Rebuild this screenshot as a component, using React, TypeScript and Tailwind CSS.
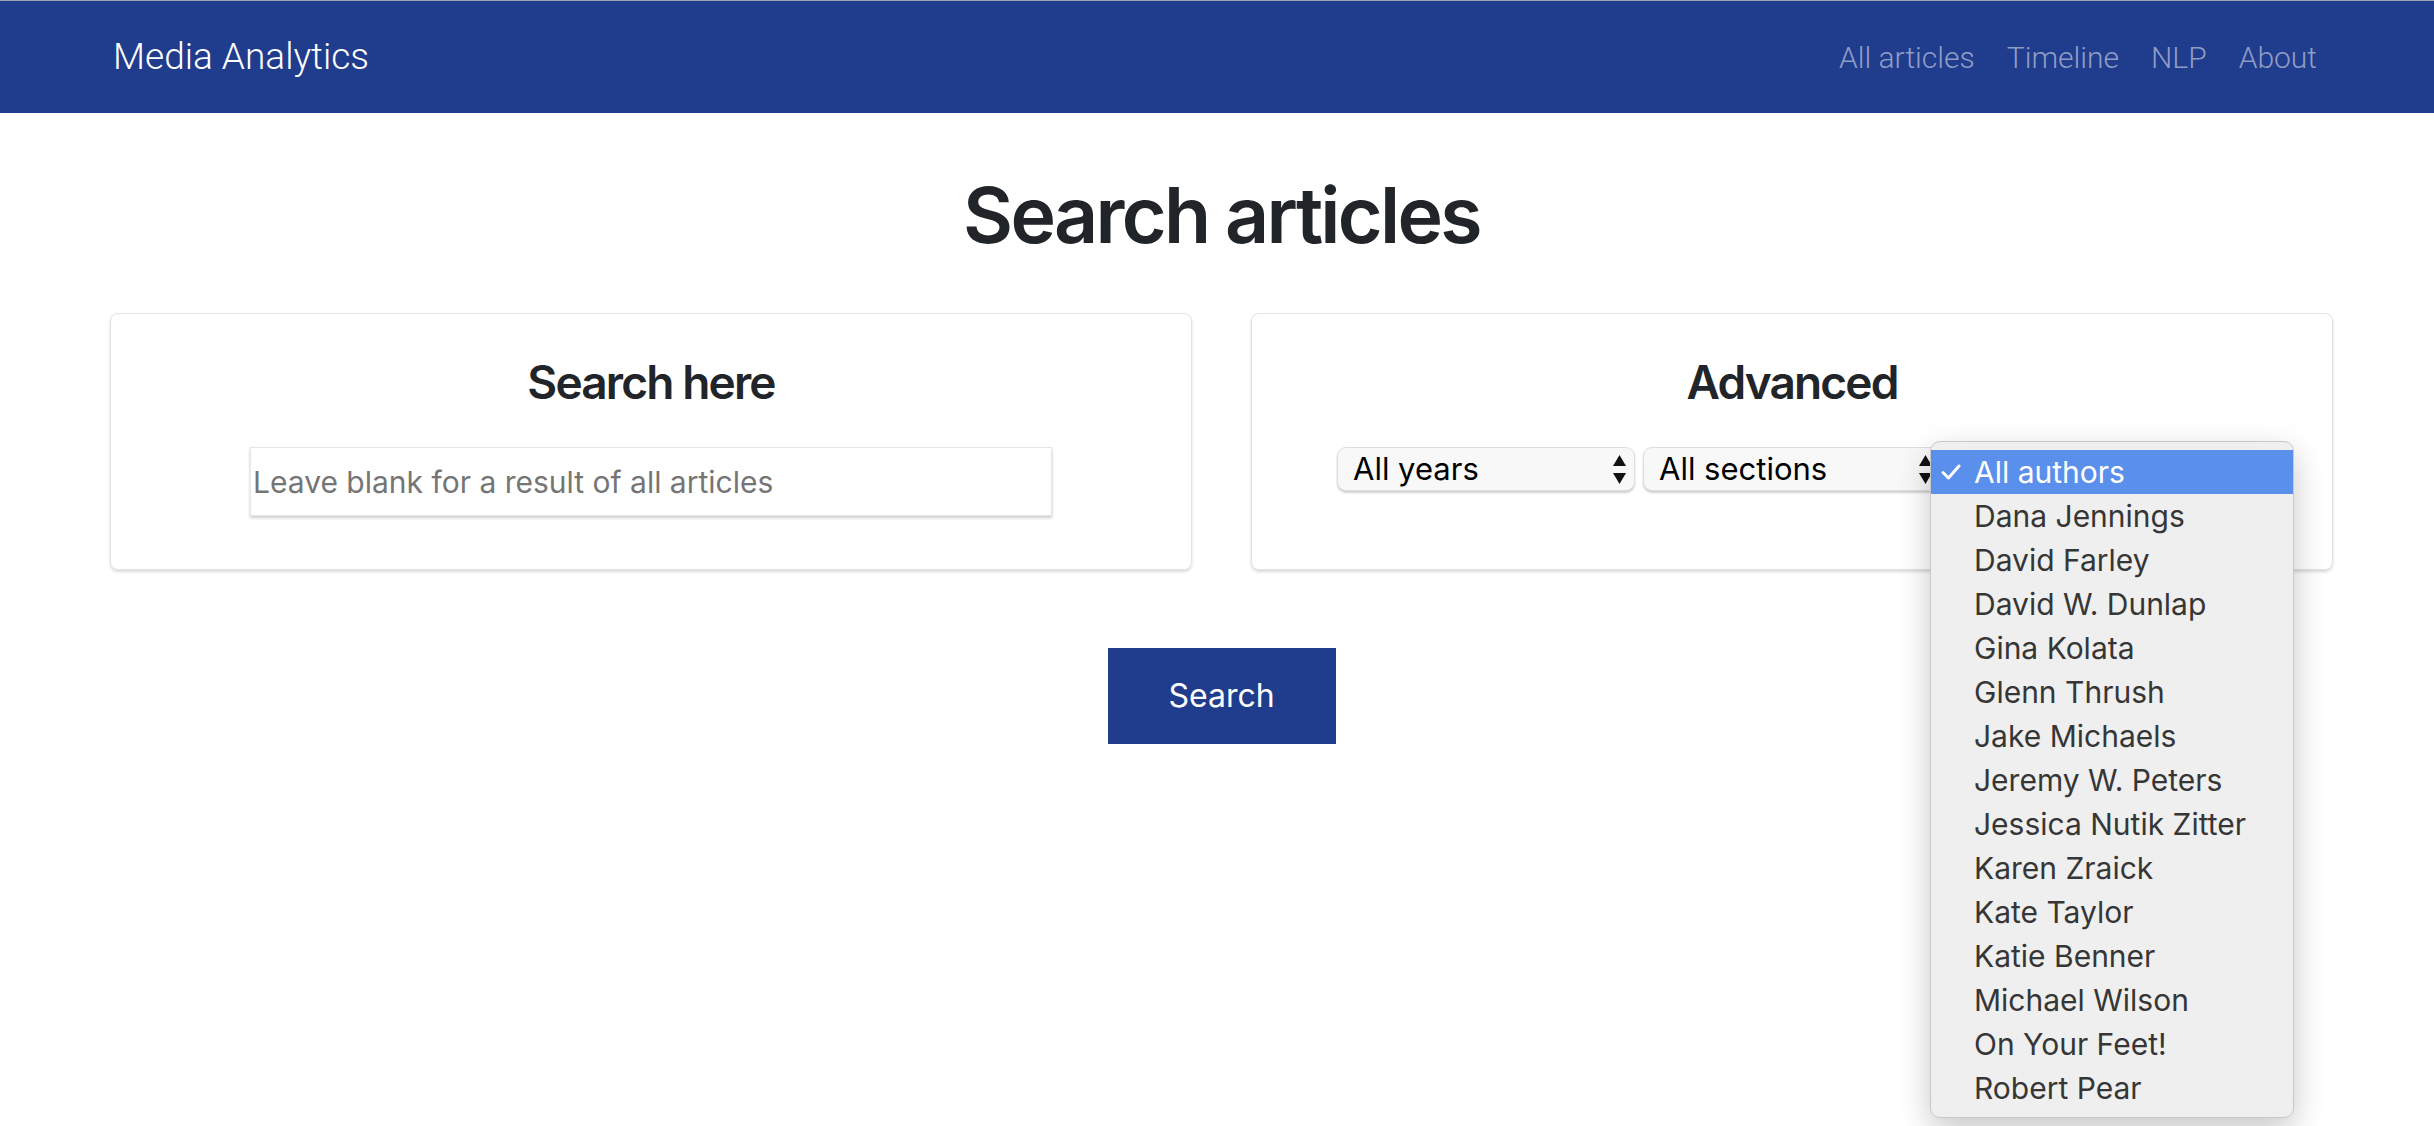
const navLinks = ["All articles", "Timeline", "NLP", "About"];

const authors = [
  "All authors",
  "Dana Jennings",
  "David Farley",
  "David W. Dunlap",
  "Gina Kolata",
  "Glenn Thrush",
  "Jake Michaels",
  "Jeremy W. Peters",
  "Jessica Nutik Zitter",
  "Karen Zraick",
  "Kate Taylor",
  "Katie Benner",
  "Michael Wilson",
  "On Your Feet!",
  "Robert Pear",
];

function Arrows() {
  return (
    <svg width="13" height="29" viewBox="0 0 13 29" className="shrink-0">
      <path d="M6.5 0 L13 11 L0 11 Z" fill="#111" />
      <path d="M0 18 L13 18 L6.5 29 Z" fill="#111" />
    </svg>
  );
}

function SelectBox({ label, children }: { label: string; children?: React.ReactNode }) {
  return (
    <div className="relative flex h-[44px] w-[298px] items-center justify-between rounded-[9px] border border-[#dedede] bg-[#f8f8f8] pl-[15px] pr-[8px] text-[31px] text-black shadow-[0_2px_2px_rgba(0,0,0,0.18)]">
      <span>{label}</span>
      <Arrows />
      {children}
    </div>
  );
}

function AuthorMenu() {
  return (
    <div className="absolute left-[-20px] top-[-7px] z-10 w-[364px] rounded-[10px] border border-[#c8c8c8] bg-[#efefef] pb-[7px] pt-[8px] shadow-[0_12px_32px_rgba(0,0,0,0.22)]">
      {authors.map((name, i) =>
        i === 0 ? (
          <div key={name} className="relative flex h-[44px] items-center bg-[#5a8fec] pl-[43px] text-[30px] text-white">
            <svg width="20" height="16" viewBox="0 0 20 16" className="absolute left-[10px] top-[14px]">
              <path d="M2 8.5 L7.5 14 L18 2" fill="none" stroke="#fff" strokeWidth="3" strokeLinecap="round" strokeLinejoin="round" />
            </svg>
            {name}
          </div>
        ) : (
          <div key={name} className="flex h-[44px] items-center pl-[43px] text-[30px] text-[#363636]">
            {name}
          </div>
        )
      )}
    </div>
  );
}

export default function App() {
  return (
    <div className="min-h-screen bg-white font-['Inter',sans-serif] text-[#212529]">
      <header className="flex h-[113px] items-center border-t border-[#9ca3b4] bg-[#1f3c8d]">
        <div className="ml-[110px] flex w-[2223px] items-center justify-between font-['Roboto',sans-serif] font-light">
          <a className="pl-[3px] text-[37px] text-white">Media Analytics</a>
          <nav className="flex">
            {navLinks.map((l) => (
              <a key={l} className="px-4 text-[30px] text-[#8f9dc6]">
                {l}
              </a>
            ))}
          </nav>
        </div>
      </header>

      <main className="ml-[110px] w-[2223px]">
        <h1 className="mt-[54px] text-center text-[77px] font-semibold leading-[96px] tracking-[-0.035em]">
          Search articles
        </h1>

        <div className="mt-[50px] grid grid-cols-2 gap-[59px]">
          <div className="flex flex-col items-center rounded-[8px] border border-[#e2e2e2] pb-[53px] pt-[39px] shadow-[0_2px_3px_rgba(0,0,0,0.15)]">
            <h4 className="text-[46px] font-semibold leading-[58px] tracking-[-0.04em]">Search here</h4>
            <input
              placeholder="Leave blank for a result of all articles"
              className="mt-[36px] h-[69px] w-[802px] border border-[#e6e6e6] px-[2px] text-[30px] shadow-[0_2px_3px_rgba(0,0,0,0.2)] outline-none placeholder:text-[#757575]"
            />
          </div>

          <div className="flex flex-col items-center rounded-[8px] border border-[#e2e2e2] pb-[53px] pt-[39px] shadow-[0_2px_3px_rgba(0,0,0,0.15)]">
            <h4 className="text-[46px] font-semibold leading-[58px] tracking-[-0.04em]">Advanced</h4>
            <div className="mt-[36px] flex gap-2">
              <SelectBox label="All years" />
              <SelectBox label="All sections" />
              <SelectBox label="All authors">
                <AuthorMenu />
              </SelectBox>
            </div>
          </div>
        </div>

        <div className="mt-[78px] flex justify-center">
          <button className="h-[96px] w-[228px] bg-[#1f3c8d] text-[32px] text-white">Search</button>
        </div>
      </main>
    </div>
  );
}
